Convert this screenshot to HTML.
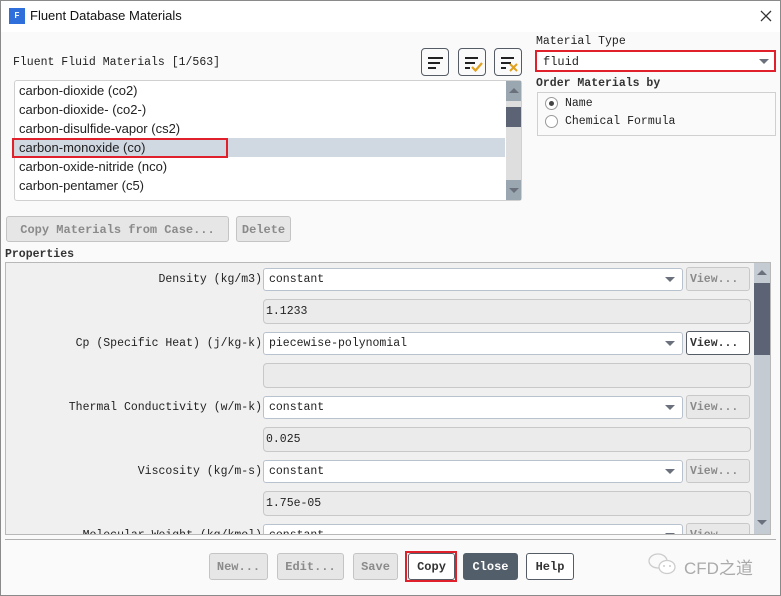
<!DOCTYPE html>
<html><head><meta charset="utf-8"><style>
*{box-sizing:border-box;margin:0;padding:0}
html,body{width:781px;height:596px;overflow:hidden}
body{position:relative;background:#fafafa;font-family:"Liberation Mono","Noto Sans CJK SC",monospace;font-size:11.5px;color:#222}
.a{position:absolute}
.win{left:0;top:0;width:781px;height:596px;border:1px solid #8a8a8a}
.tb{left:1px;top:1px;width:779px;height:31px;background:#fff}
.sans{font-family:"Liberation Sans","Noto Sans CJK SC",sans-serif}
.btn{position:absolute;border:1px solid #c4c4c4;border-radius:3px;background:#e6e6e6;color:#8a8a8a;font-weight:bold;font-size:12px;text-align:center;line-height:25px}
.dd{position:absolute;background:#fff;border:1px solid #b8c2ce;border-radius:3px;padding-left:5px;line-height:21px}
.dd:after{content:"";position:absolute;right:7px;top:8px;border-left:5px solid transparent;border-right:5px solid transparent;border-top:5px solid #6a717c}
.val{position:absolute;background:#ebebeb;border:1px solid #c8c8c8;border-radius:4px;padding-left:2px;line-height:24px}
.lbl{position:absolute;right:519px;text-align:right;white-space:nowrap}
.vw{position:absolute;left:686px;width:64px;height:24px;border:1px solid #c8c8c8;border-radius:3px;background:#e8e8e8;color:#8a8a8a;font-weight:bold;line-height:23px;padding-left:3px}
.li{position:absolute;left:19px;font-size:13px;font-family:"Liberation Sans",sans-serif}
.ib{position:absolute;top:48px;width:28px;height:28px;border:1px solid #555c66;border-radius:4px;background:#fafafa}
.ln{position:absolute;height:2px;background:#222}
</style></head><body>
<div class="a win"></div>
<div class="a tb"></div>
<div class="a" style="left:9px;top:8px;width:16px;height:16px;background:#2f6fdc;color:#fff;font:bold 8px 'Liberation Sans';text-align:center;line-height:16px">F</div>
<div class="a sans" style="left:30px;top:8px;font-size:13px;color:#111">Fluent Database Materials</div>
<svg class="a" style="left:760px;top:10px" width="12" height="12"><path d="M1 1L11 11M11 1L1 11" stroke="#333" stroke-width="1.3"/></svg>

<div class="a" style="left:13px;top:56px;font-size:11.5px">Fluent Fluid Materials [1/563]</div>
<div class="ib" style="left:421px"><div class="ln" style="left:6px;top:8px;width:15px"></div><div class="ln" style="left:6px;top:13px;width:12px"></div><div class="ln" style="left:6px;top:18px;width:8px"></div></div>
<div class="ib" style="left:458px"><div class="ln" style="left:6px;top:8px;width:13px"></div><div class="ln" style="left:6px;top:13px;width:10px"></div><div class="ln" style="left:6px;top:18px;width:5px"></div><svg class="a" style="left:12px;top:13px" width="12" height="10"><path d="M1 5L4.5 8.5L11 1" stroke="#e0a020" stroke-width="2.2" fill="none"/></svg></div>
<div class="ib" style="left:494px"><div class="ln" style="left:6px;top:8px;width:13px"></div><div class="ln" style="left:6px;top:13px;width:10px"></div><div class="ln" style="left:6px;top:18px;width:5px"></div><svg class="a" style="left:14px;top:14px" width="9" height="9"><path d="M1 1L8 8M8 1L1 8" stroke="#e0a020" stroke-width="2"/></svg></div>

<div class="a" style="left:14px;top:80px;width:508px;height:121px;background:#fff;border:1px solid #d0d0d0;border-radius:3px"></div>
<div class="a" style="left:15px;top:138px;width:490px;height:19px;background:#d0d8e2"></div>
<div class="a" style="left:12px;top:138px;width:216px;height:20px;border:2px solid #e0202a"></div>
<div class="li" style="top:83px">carbon-dioxide (co2)</div>
<div class="li" style="top:102px">carbon-dioxide- (co2-)</div>
<div class="li" style="top:121px">carbon-disulfide-vapor (cs2)</div>
<div class="li" style="top:140px">carbon-monoxide (co)</div>
<div class="li" style="top:159px">carbon-oxide-nitride (nco)</div>
<div class="li" style="top:178px">carbon-pentamer (c5)</div>
<div class="a" style="left:506px;top:81px;width:15px;height:119px;background:#dedede"></div>
<div class="a" style="left:506px;top:81px;width:15px;height:20px;background:#9ba7b0"></div>
<div class="a" style="left:509px;top:88px;border-left:5px solid transparent;border-right:5px solid transparent;border-bottom:5px solid #6a717c"></div>
<div class="a" style="left:506px;top:107px;width:15px;height:20px;background:#5b6375"></div>
<div class="a" style="left:506px;top:180px;width:15px;height:20px;background:#9ba7b0"></div>
<div class="a" style="left:509px;top:188px;border-left:5px solid transparent;border-right:5px solid transparent;border-top:5px solid #6a717c"></div>

<div class="btn" style="left:6px;top:216px;width:223px;height:26px;line-height:26px">Copy Materials from Case...</div>
<div class="btn" style="left:236px;top:216px;width:55px;height:26px;line-height:26px">Delete</div>

<div class="a" style="left:536px;top:35px">Material Type</div>
<div class="a" style="left:535px;top:50px;width:241px;height:22px;border:2px solid #e0202a;background:#fff;padding-left:6px;line-height:20px;font-size:12px">fluid</div>
<div class="a" style="left:759px;top:59px;border-left:5px solid transparent;border-right:5px solid transparent;border-top:5px solid #6a717c"></div>
<div class="a" style="left:536px;top:77px;font-weight:bold;color:#333">Order Materials by</div>
<div class="a" style="left:537px;top:92px;width:239px;height:44px;border:1px solid #d0d0d0;background:#fafafa"></div>
<div class="a" style="left:545px;top:97px;width:13px;height:13px;border:1px solid #999;border-radius:50%;background:#fff"></div>
<div class="a" style="left:549px;top:101px;width:5px;height:5px;border-radius:50%;background:#444"></div>
<div class="a" style="left:565px;top:97px">Name</div>
<div class="a" style="left:545px;top:115px;width:13px;height:13px;border:1px solid #999;border-radius:50%;background:#fff"></div>
<div class="a" style="left:565px;top:115px">Chemical Formula</div>

<div class="a" style="left:5px;top:248px;font-weight:bold;color:#333">Properties</div>
<div class="a" style="left:5px;top:262px;width:766px;height:273px;border:1px solid #b8b8b8;background:#f0f0f0"></div>
<div class="a" style="left:754px;top:263px;width:16px;height:271px;background:#c5cbd2"></div>
<div class="a" style="left:757px;top:270px;border-left:5px solid transparent;border-right:5px solid transparent;border-bottom:5px solid #6a717c"></div>
<div class="a" style="left:754px;top:283px;width:16px;height:72px;background:#5b6375"></div>
<div class="a" style="left:757px;top:520px;border-left:5px solid transparent;border-right:5px solid transparent;border-top:5px solid #6a717c"></div>
<div class="a" style="left:6px;top:263px;width:748px;height:271px;overflow:hidden">
 <div class="a" style="left:-6px;top:-263px;width:781px;height:560px">
  <div class="lbl" style="top:273px">Density (kg/m3)</div>
  <div class="dd" style="left:263px;top:268px;width:420px;height:23px">constant</div>
  <div class="vw" style="top:267px">View...</div>
  <div class="val" style="left:263px;top:299px;width:488px;height:25px">1.1233</div>
  <div class="lbl" style="top:337px">Cp (Specific Heat) (j/kg-k)</div>
  <div class="dd" style="left:263px;top:332px;width:420px;height:23px">piecewise-polynomial</div>
  <div class="vw" style="top:331px;border-color:#555c66;background:#fff;color:#333">View...</div>
  <div class="val" style="left:263px;top:363px;width:488px;height:25px"></div>
  <div class="lbl" style="top:401px">Thermal Conductivity (w/m-k)</div>
  <div class="dd" style="left:263px;top:396px;width:420px;height:23px">constant</div>
  <div class="vw" style="top:395px">View...</div>
  <div class="val" style="left:263px;top:427px;width:488px;height:25px">0.025</div>
  <div class="lbl" style="top:465px">Viscosity (kg/m-s)</div>
  <div class="dd" style="left:263px;top:460px;width:420px;height:23px">constant</div>
  <div class="vw" style="top:459px">View...</div>
  <div class="val" style="left:263px;top:491px;width:488px;height:25px">1.75e-05</div>
  <div class="lbl" style="top:529px">Molecular Weight (kg/kmol)</div>
  <div class="dd" style="left:263px;top:524px;width:420px;height:23px">constant</div>
  <div class="vw" style="top:523px">View...</div>
 </div>
</div>
<div class="a" style="left:5px;top:539px;width:771px;height:1px;background:#b0b0b0"></div>

<div class="btn" style="left:209px;top:553px;width:59px;height:27px;line-height:26px">New...</div>
<div class="btn" style="left:277px;top:553px;width:67px;height:27px;line-height:26px">Edit...</div>
<div class="btn" style="left:353px;top:553px;width:45px;height:27px;line-height:26px">Save</div>
<div class="a" style="left:405px;top:551px;width:52px;height:31px;border:2px solid #e0202a"></div>
<div class="btn" style="left:408px;top:553px;width:47px;height:27px;line-height:26px;background:#fff;border-color:#555c66;color:#333">Copy</div>
<div class="btn" style="left:463px;top:553px;width:55px;height:27px;line-height:26px;background:#535e6b;border-color:#535e6b;color:#fff">Close</div>
<div class="btn" style="left:526px;top:553px;width:48px;height:27px;line-height:26px;background:#fff;border-color:#555c66;color:#333">Help</div>
<svg class="a" style="left:647px;top:551px" width="32" height="26"><ellipse cx="11" cy="10" rx="9" ry="7" fill="none" stroke="#ccc" stroke-width="1.3"/><ellipse cx="20" cy="16" rx="8" ry="6.5" fill="#fff" stroke="#ccc" stroke-width="1.3"/><circle cx="17" cy="15" r="1" fill="#ccc"/><circle cx="23" cy="15" r="1" fill="#ccc"/></svg>
<div class="a sans" style="left:684px;top:554px;font-size:17px;color:#aaa">CFD之道</div>
</body></html>
